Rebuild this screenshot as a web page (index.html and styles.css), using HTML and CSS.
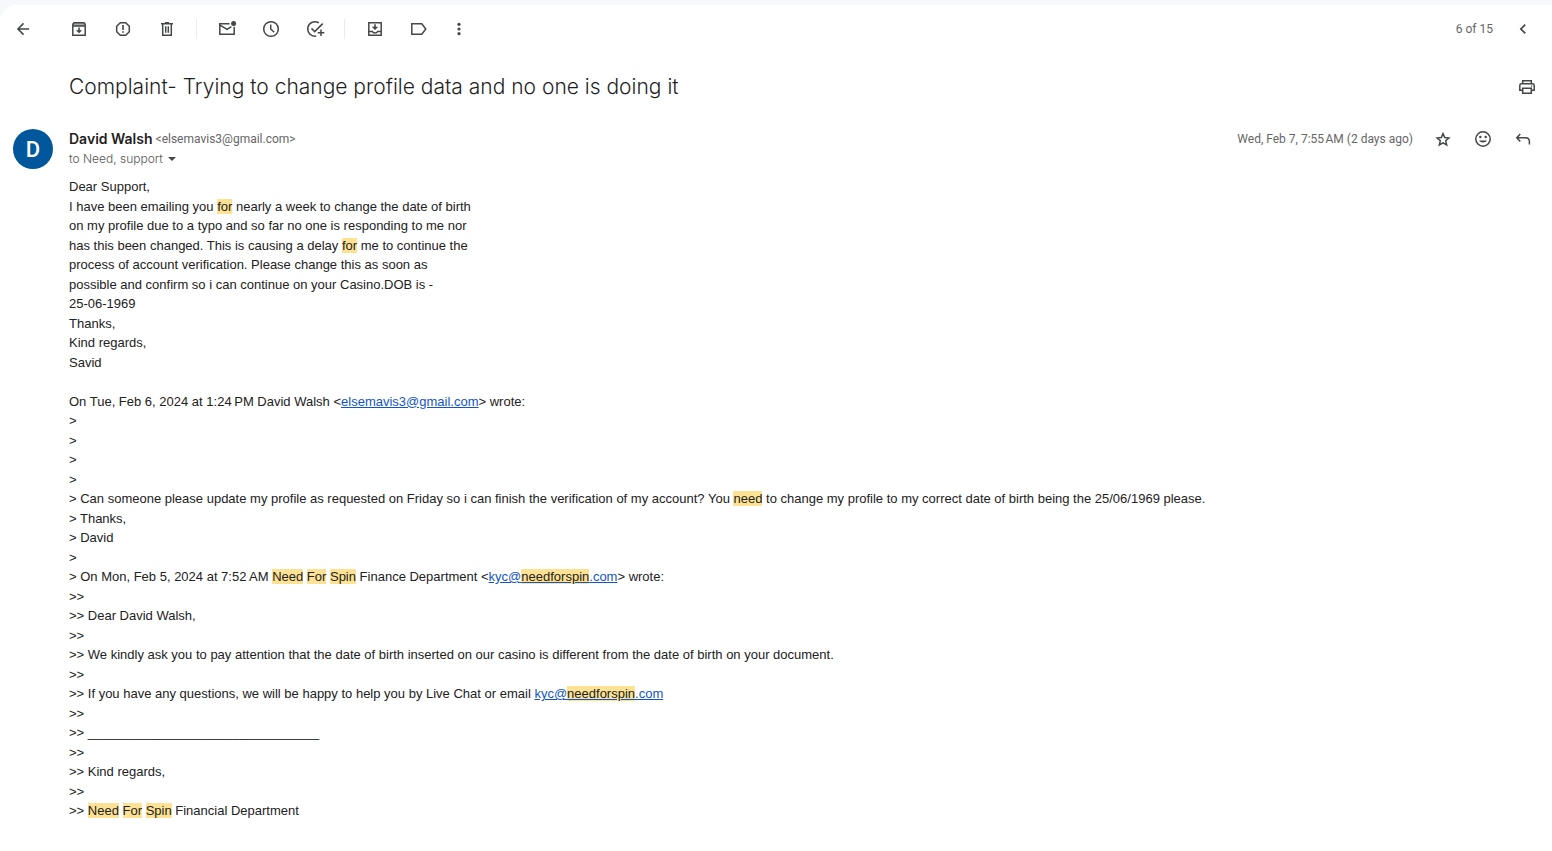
FILE: index.html
```html
<!DOCTYPE html>
<html lang="en">
<head>
<meta charset="utf-8">
<meta name="viewport" content="width=device-width, initial-scale=1">
<title>Complaint- Trying to change profile data and no one is doing it</title>
<link rel="stylesheet" href="styles.css">
</head>
<body>
<main class="panel">
  <header class="toolbar">
    <button class="icon-button back" type="button" aria-label="Back">
      <svg viewBox="-1 -1 26 26"><path d="M20 11H7.8l5.6-5.6L12 4l-8 8 8 8 1.4-1.4L7.8 13H20z"/></svg>
    </button>
    <div class="group">
      <button class="icon-button" type="button" aria-label="Archive">
        <svg viewBox="0 0 20 20"><path class="tint" d="M4 4h12v3H4z"/><path class="line" d="M3.8 5.2 5 3.8h10l1.2 1.4v11H3.8zM3.8 7h12.4"/><path d="M9.2 8.5h1.6v2.7h2.4L10 14.3l-3.2-3.1h2.4z"/></svg>
      </button>
      <button class="icon-button" type="button" aria-label="Report spam">
        <svg viewBox="0 0 20 20"><path class="line" d="M7.3 3.7h5.4l3.6 3.6v5.4l-3.6 3.6H7.3l-3.6-3.6V7.3z"/><path d="M9.2 6h1.6v5H9.2zM9.2 12.2h1.6v1.6H9.2z"/></svg>
      </button>
      <button class="icon-button" type="button" aria-label="Delete">
        <svg viewBox="0 0 20 20"><path class="line" d="M4 4.7h12M8 3.8h4M5.7 5v11.3h8.6V5M8.7 7.2v6.6M11.3 7.2v6.6"/></svg>
      </button>
    </div>
    <span class="divider"></span>
    <div class="group">
      <button class="icon-button" type="button" aria-label="Mark as unread">
        <svg viewBox="0 0 20 20"><path class="line" d="M12.5 4.7H2.8v10.6h14.4V7.8M3 6.2l7 4.1 4.4-2.6"/><circle cx="16.6" cy="4.6" r="2.5"/></svg>
      </button>
      <button class="icon-button" type="button" aria-label="Snooze">
        <svg viewBox="0 0 20 20"><circle class="line" cx="10" cy="10" r="7.3"/><path class="line" d="M9.7 5.5V10l3.5 3.3"/></svg>
      </button>
      <button class="icon-button" type="button" aria-label="Add to tasks">
        <svg viewBox="0 0 20 20"><path class="line" d="M13.9 3.9A7.2 7.2 0 1 0 11.2 17M6.5 9.4l3.2 3.2 8-8M16 10.400v6.600M12.700 13.700h6.600"/></svg>
      </button>
    </div>
    <span class="divider"></span>
    <div class="group">
      <button class="icon-button" type="button" aria-label="Move to">
        <svg viewBox="0 0 20 20"><path class="line" d="M3.8 3.8h12.4v12.4H3.8zM4 12.4h3.4c.6 2.2 4.6 2.2 5.2 0H16"/><path d="M9.2 5.3h1.6v2.5h2.5L10 11 6.7 7.8h2.5z"/></svg>
      </button>
      <button class="icon-button" type="button" aria-label="Labels">
        <svg viewBox="0 0 20 20"><path class="line" d="M2.8 4.7h10L16.8 10l-4 5.3h-10z"/></svg>
      </button>
      <button class="icon-button more" type="button" aria-label="More">
        <svg viewBox="0 0 12 20"><circle cx="6" cy="5.3" r="1.6"/><circle cx="6" cy="10" r="1.6"/><circle cx="6" cy="14.7" r="1.6"/></svg>
      </button>
    </div>
    <div class="pager">
      <span>6 of 15</span>
      <button class="icon-button" type="button" aria-label="Newer">
        <svg viewBox="0 0 24 24"><path d="M15.4 7.4 14 6l-6 6 6 6 1.4-1.4L10.8 12z"/></svg>
      </button>
    </div>
  </header>

  <section class="subject">
    <h1>Complaint- Trying to change profile data and no one is doing it</h1>
    <button class="icon-button" type="button" aria-label="Print">
      <svg viewBox="0 0 20 20"><path class="line" d="M5.7 6.5V3.8h8.6v2.7M5.5 13.3H2.8V8.500q0-1.700 1.700-1.700h11q1.700 0 1.700 1.700v4.800h-2.700M5.700 11.200h8.600v5H5.700z"/><circle cx="14.500" cy="9" r=".8"/></svg>
    </button>
  </section>

  <article class="message">
    <div class="avatar">D</div>
    <div class="content">
      <div class="meta">
        <div class="sender">
          <div class="from"><strong>David Walsh</strong> <span>&lt;elsemavis3@gmail.com&gt;</span></div>
          <button class="recipients" type="button">to Need, support <span class="caret"></span></button>
        </div>
        <div class="actions">
          <time datetime="2024-02-07T07:55">Wed, Feb 7, 7:55&#8239;AM (2 days ago)</time>
          <button class="icon-button" type="button" aria-label="Star">
            <svg viewBox="0 0 20 20"><path class="line" d="m10 4.600 1.700 4 4.200.400-3.200 2.800 1 4.200-3.700-2.200L6.300 16l1-4.200L4.100 9l4.200-.400z"/></svg>
          </button>
          <button class="icon-button" type="button" aria-label="Add reaction">
            <svg viewBox="0 0 20 20"><circle class="line" cx="10" cy="10" r="7.200"/><circle cx="7.300" cy="8" r="1.200"/><circle cx="12.700" cy="8" r="1.200"/><path d="M6 11.500h8a4.200 3 0 0 1-8 0z"/></svg>
          </button>
          <button class="icon-button" type="button" aria-label="Reply">
            <svg viewBox="0 0 20 20"><path class="line" d="M7.300 5 3.800 8.700l3.500 3.700M4 8.700h8.500q3.900 0 3.900 3.900v2.900"/></svg>
          </button>
        </div>
      </div>
      <div class="body">
        Dear Support,<br>
        I have been emailing you <mark>for</mark> nearly a week to change the date of birth<br>
        on my profile due to a typo and so far no one is responding to me nor<br>
        has this been changed. This is causing a delay <mark>for</mark> me to continue the<br>
        process of account verification. Please change this as soon as<br>
        possible and confirm so i can continue on your Casino.DOB is -<br>
        25-06-1969<br>
        Thanks,<br>
        Kind regards,<br>
        Savid<br>
        <br>
        On Tue, Feb 6, 2024 at 1:24&#8239;PM David Walsh &lt;<a href="mailto:elsemavis3@gmail.com">elsemavis3@gmail.com</a>&gt; wrote:<br>
        &gt;<br>
        &gt;<br>
        &gt;<br>
        &gt;<br>
        &gt; Can someone please update my profile as requested on Friday so i can finish the verification of my account? You <mark>need</mark> to change my profile to my correct date of birth being the 25/06/1969 please.<br>
        &gt; Thanks,<br>
        &gt; David<br>
        &gt;<br>
        &gt; On Mon, Feb 5, 2024 at 7:52&#8239;AM <mark>Need</mark> <mark>For</mark> <mark>Spin</mark> Finance Department &lt;<a href="mailto:kyc@needforspin.com">kyc@<mark>needforspin</mark>.com</a>&gt; wrote:<br>
        &gt;&gt;<br>
        &gt;&gt; Dear David Walsh,<br>
        &gt;&gt;<br>
        &gt;&gt; We kindly ask you to pay attention that the date of birth inserted on our casino is different from the date of birth on your document.<br>
        &gt;&gt;<br>
        &gt;&gt; If you have any questions, we will be happy to help you by Live Chat or email <a href="mailto:kyc@needforspin.com">kyc@<mark>needforspin</mark>.com</a><br>
        &gt;&gt;<br>
        &gt;&gt; ________________________________<br>
        &gt;&gt;<br>
        &gt;&gt; Kind regards,<br>
        &gt;&gt;<br>
        &gt;&gt; <mark>Need</mark> <mark>For</mark> <mark>Spin</mark> Financial Department
      </div>
    </div>
  </article>
</main>
</body>
</html>
```
FILE: styles.css
```css
* {
  box-sizing: border-box;
}

body {
  margin: 0;
  padding-top: 5px;
  background: #f6f8fc;
  color: #222;
  font-family: "Liberation Sans", Arial, sans-serif;
  font-size: 13px;
}

.panel {
  min-height: calc(100vh - 5px);
  background: #fff;
  border-top-left-radius: 16px;
}

.icon-button {
  flex: none;
  width: 20px;
  height: 20px;
  padding: 0;
  border: 0;
  background: none;
  cursor: pointer;
}

.icon-button svg {
  display: block;
  width: 100%;
  height: 100%;
  fill: #444746;
}

.icon-button .line {
  fill: none;
  stroke: #444746;
  stroke-width: 1.5;
}

.icon-button .tint {
  fill: #a5a7a6;
}

.icon-button.more {
  width: 12px;
}

.toolbar {
  display: flex;
  align-items: center;
  height: 48px;
  padding: 0 19px 0 13px;
}

.back {
  margin-right: 36px;
}

.group {
  display: flex;
  gap: 24px;
}

.divider {
  width: 1px;
  height: 20px;
  margin: 0 20px 0 19px;
  background: #e9ebee;
}

.pager {
  display: flex;
  align-items: center;
  gap: 20px;
  margin-left: auto;
  color: #666;
  font-family: Roboto, sans-serif;
  font-size: 12px;
  line-height: 20px;
}

.subject {
  display: flex;
  align-items: center;
  justify-content: space-between;
  padding: 20px 15px 20px 69px;
}

.subject h1 {
  margin: 0;
  color: #1f1f1f;
  font-family: Inter, sans-serif;
  font-size: 21px;
  font-weight: 300;
  line-height: 28px;
}

.message {
  display: flex;
  gap: 16px;
  padding: 8px 19px 30px 13px;
}

.avatar {
  display: flex;
  flex: none;
  align-items: center;
  justify-content: center;
  width: 40px;
  height: 40px;
  border-radius: 50%;
  background: #00579b;
  color: #fff;
  font-family: Roboto, sans-serif;
  font-size: 22px;
  font-weight: 500;
}

.content {
  flex: 1;
}

.meta {
  display: flex;
  align-items: flex-start;
  justify-content: space-between;
  color: #666;
  font-family: Roboto, sans-serif;
  font-size: 12px;
  line-height: 20px;
}

.from {
  display: flex;
  align-items: center;
  gap: 3px;
}

.from strong {
  color: #1f1f1f;
  font-family: Inter, sans-serif;
  font-size: 14px;
  font-weight: 600;
}

.recipients {
  display: flex;
  align-items: center;
  gap: 5px;
  padding: 0;
  border: 0;
  background: none;
  color: #555;
  font-family: Inter, sans-serif;
  font-size: 12px;
  font-weight: 300;
  line-height: 20px;
}

.caret {
  border: 4px solid transparent;
  border-top-color: #444746;
  border-bottom: 0;
}

.actions {
  display: flex;
  gap: 20px;
}

.body {
  margin-top: 8px;
  line-height: 1.5;
}

.body a {
  color: #15c;
}

.body mark {
  background: #fde293;
  color: #222;
}
```
